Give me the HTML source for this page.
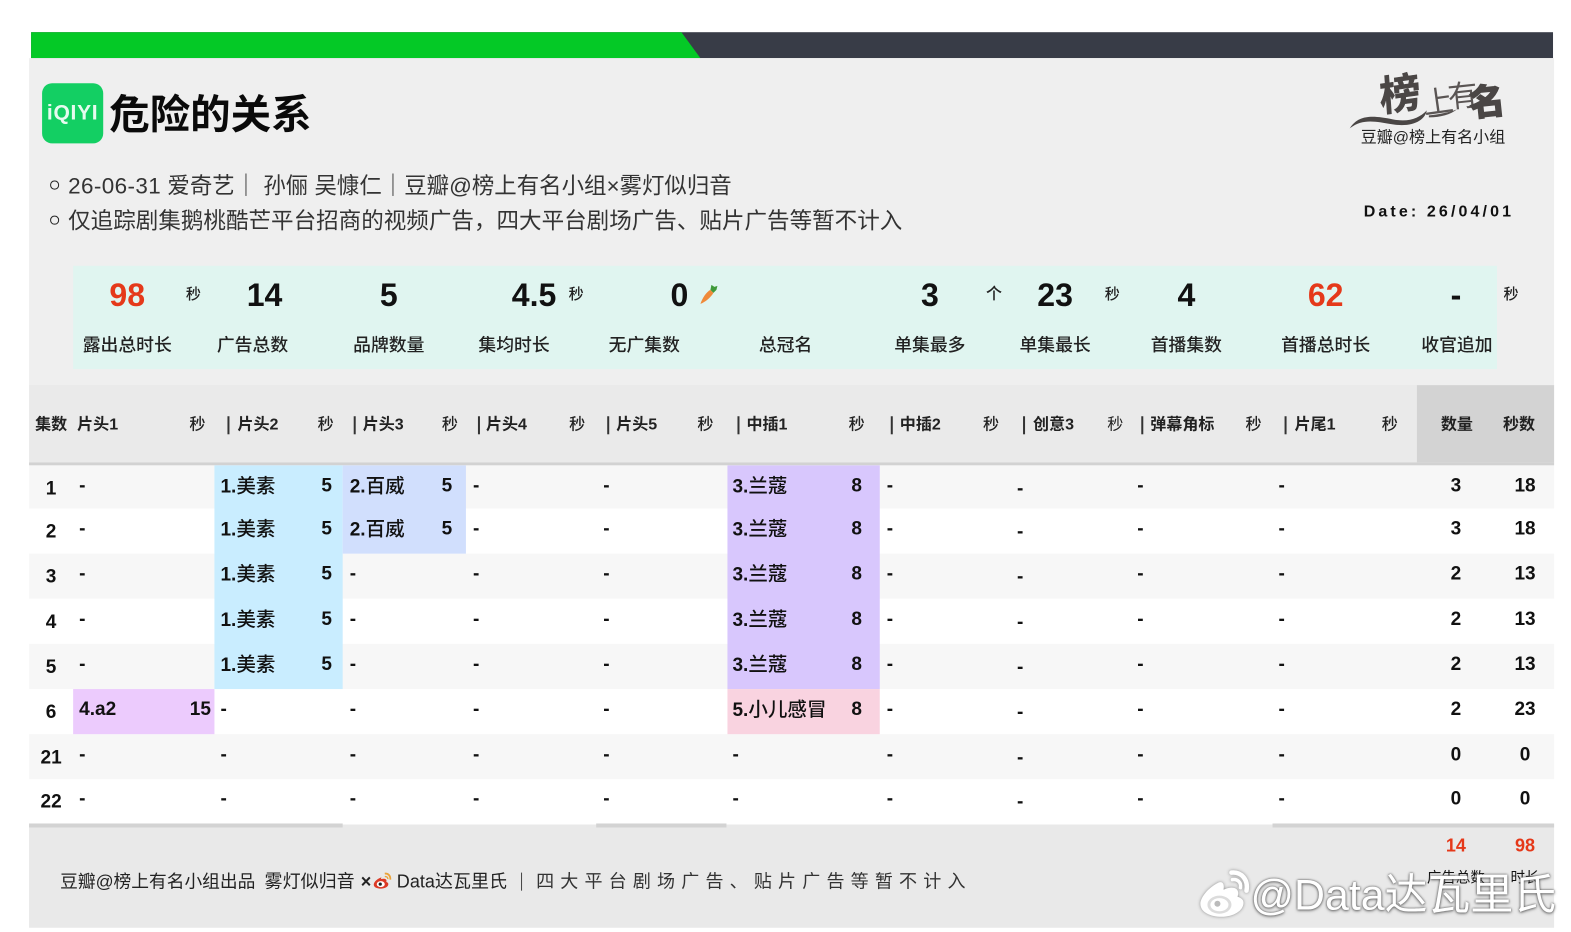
<!DOCTYPE html>
<html lang="zh"><head><meta charset="utf-8"><title>危险的关系</title>
<style>
html,body{margin:0;padding:0;background:#fff}
#p{position:relative;width:1571px;height:932px;overflow:hidden;background:#fff;font-family:"Liberation Sans","Noto Sans CJK SC",sans-serif;color:#111}
#q{left:0;top:0;width:1571px;height:932px;transform:scale(1.002,1.003);transform-origin:0 0}
#p div,#p span,#p svg{position:absolute}
#p i{font-style:normal;font-weight:500;font-size:19.5px}
.t{white-space:nowrap;line-height:20px;height:20px}
.c{transform:translateX(-50%)}
.s{font-size:32px;font-weight:700;line-height:36px;height:36px;top:276px;white-space:nowrap;transform:translateX(-50%);color:#111}
.red{color:#e5391a}
.u{font-size:15px;font-weight:500;top:284.5px;line-height:18px;white-space:nowrap;transform:translateX(-50%);color:#222}
.l{font-size:17.8px;font-weight:500;top:333px;line-height:22px;white-space:nowrap;transform:translateX(-50%);color:#222}
.h{font-size:16px;font-weight:700;top:414px;line-height:20px;white-space:nowrap;color:#222}
.hu{font-size:16px;font-weight:500;top:414px;line-height:20px;white-space:nowrap;transform:translateX(-50%);color:#222}
.v{width:1.5px;height:18px;top:415px;background:#333}
.r{left:0;width:1571px;height:20px;font-size:19px;font-weight:700;line-height:20px;color:#111}
.r span{white-space:nowrap;top:0}
.n{transform:translateX(-50%)}
.e{font-size:19px;transform:translateX(-50%);top:3px!important}
</style></head><body><div id="p"><div id="q">

<div style="left:29px;top:58px;width:1522px;height:327px;background:#efefef"></div>
<svg style="left:31px;top:32px" width="1519" height="26"><rect width="1519" height="26" fill="#383c47"/><path d="M0 0H649L668 26H0Z" fill="#04c926"/></svg>

<div style="left:42px;top:83px;width:61px;height:60px;border-radius:10px;background:#13cf63"></div>
<span class="t" style="left:42px;top:102px;width:61px;text-align:center;font-size:21px;line-height:22px;color:#e6fbef;font-weight:700;letter-spacing:.7px">iQIYI</span>
<span class="t" style="left:109px;top:90px;font-size:40.4px;line-height:48px;height:48px;font-weight:700;color:#0a0a0a">危险的关系</span>

<div style="left:50px;top:180px;width:6.5px;height:6.5px;border:1.8px solid #222;border-radius:50%"></div>
<div style="left:50px;top:215px;width:6.5px;height:6.5px;border:1.8px solid #222;border-radius:50%"></div>
<span class="t" style="left:68px;top:172px;font-size:22.4px;line-height:28px;height:28px;color:#333"><b style="font-weight:400;letter-spacing:.4px">26-06-31</b> 爱奇艺｜ 孙俪 吴慷仁｜豆瓣@榜上有名小组×雾灯似归音</span>
<span class="t" style="left:68px;top:207px;font-size:22.5px;line-height:28px;height:28px;color:#333">仅追踪剧集鹅桃酷芒平台招商的视频广告，四大平台剧场广告、贴片广告等暂不计入</span>

<svg style="left:1340px;top:60px" width="170" height="72">
<path d="M7 68C16 54 30 55 50 59C66 62 76 58 84 50C82 60 70 67 50 64C32 61 20 58 7 68Z" fill="#4a4645"/>
<path d="M86 55C96 54 106 52 114 49C108 54 98 57 86 57Z" fill="#55504f"/>
<text x="40" y="48" font-family="'Noto Sans CJK SC',sans-serif" font-weight="700" font-size="41" fill="#4a4645" stroke="#4a4645" stroke-width=".6" transform="rotate(-8 60 40) skewX(-4)">榜</text>
<text x="80" y="52" font-family="'Noto Sans CJK SC',sans-serif" font-size="30" fill="#5a5554" transform="rotate(-8 95 40)">上</text>
<text x="105" y="46" font-family="'Noto Sans CJK SC',sans-serif" font-size="30" fill="#5a5554" transform="rotate(-6 120 36)">有</text>
<text x="126" y="54" font-family="'Noto Sans CJK SC',sans-serif" font-weight="900" font-size="36" fill="#4a4645" stroke="#4a4645" stroke-width=".8" transform="rotate(-6 146 40)">名</text>
</svg>
<span class="t" style="left:1358px;top:128px;font-size:16px;color:#222">豆瓣@榜上有名小组</span>
<span class="t" style="left:1361px;top:202px;font-size:16px;font-weight:700;letter-spacing:3.1px;color:#111">Date: 26/04/01</span>

<div style="left:73px;top:265px;width:1421px;height:103px;background:#e0f5f0"></div>
<span class="s red" style="left:127px">98</span><span class="u" style="left:193px">秒</span>
<span class="s" style="left:264px">14</span>
<span class="s" style="left:388px">5</span>
<span class="s" style="left:533px">4.5</span><span class="u" style="left:575px">秒</span>
<span class="s" style="left:678px">0</span>
<svg style="left:698px;top:283px" width="20" height="22" viewBox="0 0 20 22"><path d="M1 20C3 14 7 8 11 6L14 9C11 14 6 18 1 20Z" fill="#ef8a3a"/><path d="M11 6L12 1L15 3L18 2L17 6L14 9Z" fill="#3f9a3a"/></svg>
<span class="s" style="left:928px">3</span><span class="u" style="left:992px;font-size:16px">个</span>
<span class="s" style="left:1053px">23</span><span class="u" style="left:1110px">秒</span>
<span class="s" style="left:1184px">4</span>
<span class="s red" style="left:1323px">62</span>
<span class="s" style="left:1453px">-</span><span class="u" style="left:1508px">秒</span>

<span class="l" style="left:127px">露出总时长</span>
<span class="l" style="left:252px">广告总数</span>
<span class="l" style="left:388px">品牌数量</span>
<span class="l" style="left:513px">集均时长</span>
<span class="l" style="left:643px">无广集数</span>
<span class="l" style="left:784px">总冠名</span>
<span class="l" style="left:928px">单集最多</span>
<span class="l" style="left:1053px">单集最长</span>
<span class="l" style="left:1184px">首播集数</span>
<span class="l" style="left:1323px">首播总时长</span>
<span class="l" style="left:1454px">收官追加</span>

<div style="left:29px;top:384px;width:1385px;height:77px;background:#eaeaea"></div>
<div style="left:1414px;top:384px;width:137px;height:77px;background:#d3d3d3"></div>
<div style="left:29px;top:461px;width:1522px;height:3px;background:#d2d2d2"></div>

<span class="h" style="left:35px">集数</span>
<span class="h" style="left:77px">片头1</span><span class="hu" style="left:197px">秒</span>
<div class="v" style="left:227px"></div><span class="h" style="left:237px">片头2</span><span class="hu" style="left:325px">秒</span>
<div class="v" style="left:353px"></div><span class="h" style="left:362px">片头3</span><span class="hu" style="left:449px">秒</span>
<div class="v" style="left:477px"></div><span class="h" style="left:485px">片头4</span><span class="hu" style="left:576px">秒</span>
<div class="v" style="left:606px"></div><span class="h" style="left:615px">片头5</span><span class="hu" style="left:704px">秒</span>
<div class="v" style="left:736px"></div><span class="h" style="left:745px">中插1</span><span class="hu" style="left:855px">秒</span>
<div class="v" style="left:889px"></div><span class="h" style="left:898px">中插2</span><span class="hu" style="left:989px">秒</span>
<div class="v" style="left:1021px"></div><span class="h" style="left:1031px">创意3</span><span class="hu" style="left:1113px;font-weight:400">秒</span>
<div class="v" style="left:1139px"></div><span class="h" style="left:1148px">弹幕角标</span><span class="hu" style="left:1251px">秒</span>
<div class="v" style="left:1282px"></div><span class="h" style="left:1292px">片尾1</span><span class="hu" style="left:1387px">秒</span>
<span class="hu" style="left:1454px;font-weight:700">数量</span><span class="hu" style="left:1516px;font-weight:700">秒数</span>

<div style="left:29px;top:464px;width:1522px;height:43px;background:#f7f7f7"></div>
<div style="left:29px;top:507px;width:1522px;height:45px;background:#fff"></div>
<div style="left:29px;top:552px;width:1522px;height:45px;background:#f7f7f7"></div>
<div style="left:29px;top:597px;width:1522px;height:45px;background:#fff"></div>
<div style="left:29px;top:642px;width:1522px;height:45px;background:#f7f7f7"></div>
<div style="left:29px;top:687px;width:1522px;height:45px;background:#fff"></div>
<div style="left:29px;top:732px;width:1522px;height:45px;background:#f7f7f7"></div>
<div style="left:29px;top:777px;width:1522px;height:45px;background:#fff"></div>

<div style="left:214px;top:464px;width:128px;height:223px;background:#c9edff"></div>
<div style="left:342px;top:464px;width:123px;height:88px;background:#d1dffd"></div>
<div style="left:726px;top:464px;width:152px;height:223px;background:#d8c7fd"></div>
<div style="left:726px;top:687px;width:152px;height:45px;background:#f9d3e0"></div>
<div style="left:73px;top:687px;width:141px;height:45px;background:#eccbfd"></div>

<div class="r" style="top:474.5px"><span class="e" style="left:51px">1</span><span style="left:79px">-</span><span style="left:220px">1.<i>美素</i></span><span class="n" style="left:326px">5</span><span style="left:349px">2.<i>百威</i></span><span class="n" style="left:446px">5</span><span style="left:472px">-</span><span style="left:602px">-</span><span style="left:731px">3.<i>兰蔻</i></span><span class="n" style="left:855px">8</span><span style="left:885px">-</span><span style="left:1015px;top:3px">-</span><span style="left:1135px">-</span><span style="left:1276px">-</span><span class="n" style="left:1453px">3</span><span class="n" style="left:1522px">18</span></div>
<div class="r" style="top:518px"><span class="e" style="left:51px">2</span><span style="left:79px">-</span><span style="left:220px">1.<i>美素</i></span><span class="n" style="left:326px">5</span><span style="left:349px">2.<i>百威</i></span><span class="n" style="left:446px">5</span><span style="left:472px">-</span><span style="left:602px">-</span><span style="left:731px">3.<i>兰蔻</i></span><span class="n" style="left:855px">8</span><span style="left:885px">-</span><span style="left:1015px;top:3px">-</span><span style="left:1135px">-</span><span style="left:1276px">-</span><span class="n" style="left:1453px">3</span><span class="n" style="left:1522px">18</span></div>
<div class="r" style="top:563px"><span class="e" style="left:51px">3</span><span style="left:79px">-</span><span style="left:220px">1.<i>美素</i></span><span class="n" style="left:326px">5</span><span style="left:349px">-</span><span style="left:472px">-</span><span style="left:602px">-</span><span style="left:731px">3.<i>兰蔻</i></span><span class="n" style="left:855px">8</span><span style="left:885px">-</span><span style="left:1015px;top:3px">-</span><span style="left:1135px">-</span><span style="left:1276px">-</span><span class="n" style="left:1453px">2</span><span class="n" style="left:1522px">13</span></div>
<div class="r" style="top:607.5px"><span class="e" style="left:51px">4</span><span style="left:79px">-</span><span style="left:220px">1.<i>美素</i></span><span class="n" style="left:326px">5</span><span style="left:349px">-</span><span style="left:472px">-</span><span style="left:602px">-</span><span style="left:731px">3.<i>兰蔻</i></span><span class="n" style="left:855px">8</span><span style="left:885px">-</span><span style="left:1015px;top:3px">-</span><span style="left:1135px">-</span><span style="left:1276px">-</span><span class="n" style="left:1453px">2</span><span class="n" style="left:1522px">13</span></div>
<div class="r" style="top:653px"><span class="e" style="left:51px">5</span><span style="left:79px">-</span><span style="left:220px">1.<i>美素</i></span><span class="n" style="left:326px">5</span><span style="left:349px">-</span><span style="left:472px">-</span><span style="left:602px">-</span><span style="left:731px">3.<i>兰蔻</i></span><span class="n" style="left:855px">8</span><span style="left:885px">-</span><span style="left:1015px;top:3px">-</span><span style="left:1135px">-</span><span style="left:1276px">-</span><span class="n" style="left:1453px">2</span><span class="n" style="left:1522px">13</span></div>
<div class="r" style="top:698px"><span class="e" style="left:51px">6</span><span style="left:79px">4.a2</span><span class="n" style="left:200px">15</span><span style="left:220px">-</span><span style="left:349px">-</span><span style="left:472px">-</span><span style="left:602px">-</span><span style="left:731px">5.<i>小儿感冒</i></span><span class="n" style="left:855px">8</span><span style="left:885px">-</span><span style="left:1015px;top:3px">-</span><span style="left:1135px">-</span><span style="left:1276px">-</span><span class="n" style="left:1453px">2</span><span class="n" style="left:1522px">23</span></div>
<div class="r" style="top:743px"><span class="e" style="left:51px">21</span><span style="left:79px">-</span><span style="left:220px">-</span><span style="left:349px">-</span><span style="left:472px">-</span><span style="left:602px">-</span><span style="left:731px">-</span><span style="left:885px">-</span><span style="left:1015px;top:3px">-</span><span style="left:1135px">-</span><span style="left:1276px">-</span><span class="n" style="left:1453px">0</span><span class="n" style="left:1522px">0</span></div>
<div class="r" style="top:787px"><span class="e" style="left:51px">22</span><span style="left:79px">-</span><span style="left:220px">-</span><span style="left:349px">-</span><span style="left:472px">-</span><span style="left:602px">-</span><span style="left:731px">-</span><span style="left:885px">-</span><span style="left:1015px;top:3px">-</span><span style="left:1135px">-</span><span style="left:1276px">-</span><span class="n" style="left:1453px">0</span><span class="n" style="left:1522px">0</span></div>

<div style="left:29px;top:822px;width:1522px;height:103px;background:#e9e9e9"></div>
<div style="left:29px;top:821px;width:313px;height:4px;background:#d3d3d3"></div>
<div style="left:595px;top:821px;width:130px;height:4px;background:#d3d3d3"></div>
<div style="left:1270px;top:821px;width:281px;height:4px;background:#d3d3d3"></div>

<span class="t" style="left:60px;top:869px;font-size:17.7px;color:#222">豆瓣@榜上有名小组出品</span>
<span class="t" style="left:264px;top:869px;font-size:18px;color:#222">雾灯似归音</span>
<span class="t" style="left:360px;top:869px;font-size:18px;font-weight:700;color:#222">×</span>
<svg style="left:372px;top:869px" width="20" height="18" viewBox="0 0 20 18"><path d="M8 6C3 8 1 11 1 13C1 16 5 17 8 17C12 17 16 15 15.500 12C15 10.500 13.500 10.500 13.500 10C14.500 7.500 12 6.500 8 7.500C9 6 8.500 5.500 8 6Z" fill="#dc3a26"/><ellipse cx="8" cy="12.500" rx="4" ry="3" fill="#fff"/><circle cx="7.500" cy="12.500" r="1.600" fill="#222"/><path d="M12 2C15 1.500 18 4 17.500 8" fill="none" stroke="#eba33a" stroke-width="1.800"/><path d="M12 5C14 4.600 15.200 6 15 7.500" fill="none" stroke="#eba33a" stroke-width="1.300"/></svg>
<span class="t" style="left:396px;top:869px;font-size:18px;color:#222">Data达瓦里氏</span>
<div style="left:520px;top:870px;width:1.2px;height:18px;background:#444"></div>
<span class="t" style="left:535px;top:869px;font-size:18px;letter-spacing:6.150px;color:#333">四大平台剧场广告、贴片广告等暂不计入</span>

<span class="t c red" style="left:1453px;top:833px;font-size:18px;font-weight:700">14</span>
<span class="t c red" style="left:1522px;top:833px;font-size:18px;font-weight:700">98</span>
<span class="t c" style="left:1453px;top:866px;font-size:14.500px;color:#111">广告总数</span>
<span class="t c" style="left:1522px;top:866px;font-size:14.500px;color:#111">时长</span>

<svg style="left:1196px;top:866px;filter:drop-shadow(0 0 1.500px #8a8a8a)" width="52" height="50" viewBox="0 0 52 50"><path d="M20 14C8 20 2 30 2 35C2 44 13 48 23 48C35 48 45 42 45 34C45 30 41 29 39 28C41 23 39 19 33 19C29 19 26 21 25 21C26 17 25 12 20 14Z" fill="#fff"/><ellipse cx="21" cy="36" rx="12" ry="9" fill="#dcdcdc"/><ellipse cx="21" cy="36" rx="9" ry="6.500" fill="#fff"/><circle cx="19" cy="35" r="3" fill="#bbb"/><path d="M33 4C43 3 50 11 48 22" fill="none" stroke="#fff" stroke-width="4.500" stroke-linecap="round"/><path d="M34 11C39 10 43 14 42 19" fill="none" stroke="#fff" stroke-width="3.500" stroke-linecap="round"/></svg>
<span class="t" style="left:1248px;top:868px;height:50px;font-size:42.8px;line-height:50px;color:#fff;text-shadow:0 0 2px #555,0 1px 3px #777">@Data达瓦里氏</span>

</div></div></body></html>
